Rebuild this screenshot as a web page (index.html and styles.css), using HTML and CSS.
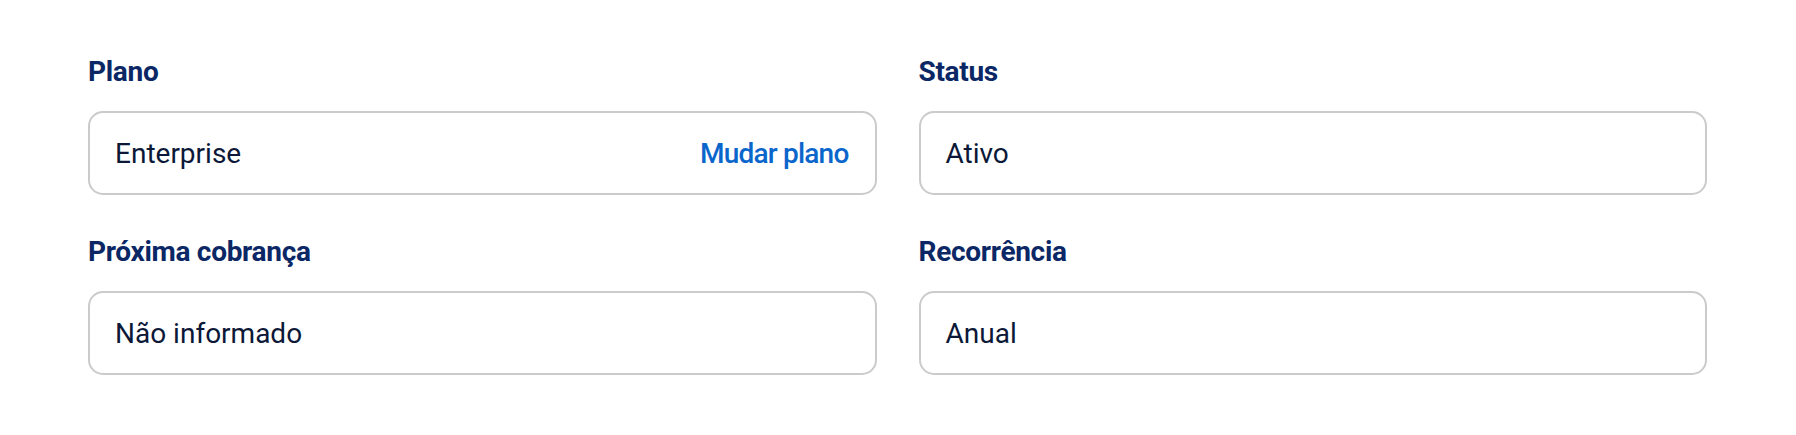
FILE: index.html
```html
<!DOCTYPE html>
<html lang="pt-BR">
<head>
    <meta charset="UTF-8">
    <meta name="viewport" content="width=device-width, initial-scale=1.0">
    <title>Assinatura</title>
    <link rel="stylesheet" href="styles.css">
</head>
<body>
    <div class="details">
        <div class="field">
            <label class="field-label">Plano</label>
            <div class="field-box">
                <span class="field-value">Enterprise</span>
                <a href="#" class="field-link">Mudar plano</a>
            </div>
        </div>
        <div class="field">
            <label class="field-label">Status</label>
            <div class="field-box">
                <span class="field-value">Ativo</span>
            </div>
        </div>
        <div class="field">
            <label class="field-label">Próxima cobrança</label>
            <div class="field-box">
                <span class="field-value">Não informado</span>
            </div>
        </div>
        <div class="field">
            <label class="field-label">Recorrência</label>
            <div class="field-box">
                <span class="field-value">Anual</span>
            </div>
        </div>
    </div>
</body>
</html>
```

FILE: styles.css
```css
body {
    margin: 0;
    font-family: Roboto, "Liberation Sans", sans-serif;
    background-color: #fff;
}
.details {
    display: grid;
    grid-template-columns: 1fr 1fr;
    column-gap: 42px;
    row-gap: 40px;
    padding: 55px 89px 60px 88px;
}
.field {
    display: flex;
    flex-direction: column;
}
.field-label {
    font-size: 28px;
    line-height: 34px;
    font-weight: 700;
    letter-spacing: -0.3px;
    color: #0b2765;
    margin-bottom: 22px;
}
.field-box {
    display: flex;
    align-items: center;
    justify-content: space-between;
    box-sizing: border-box;
    height: 84px;
    padding: 0 26px 0 25px;
    border: 2px solid #cbcbcb;
    border-radius: 15px;
}
.field-value {
    font-size: 28px;
    color: #0c1838;
}
.field-link {
    font-size: 28px;
    font-weight: 500;
    letter-spacing: -0.8px;
    color: #0b66cc;
    text-decoration: none;
}
```
